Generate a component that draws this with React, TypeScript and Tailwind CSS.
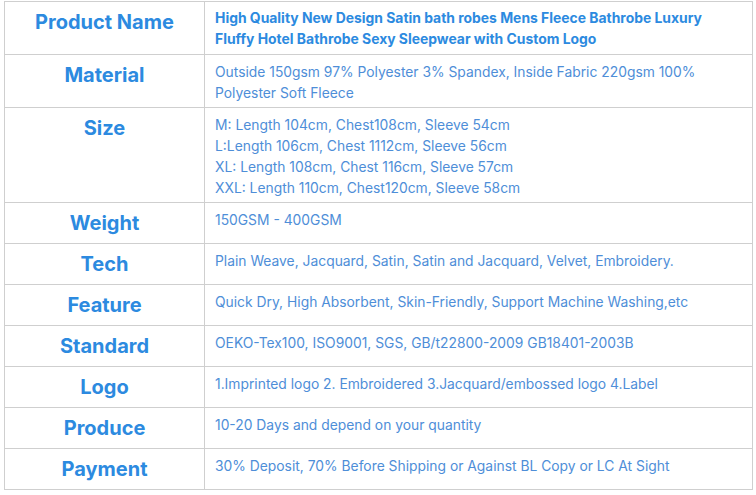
const rows: { label: string; lines: string[]; strong?: boolean }[] = [
  {
    label: "Product Name",
    lines: [
      "High Quality New Design Satin bath robes Mens Fleece Bathrobe Luxury",
      "Fluffy Hotel Bathrobe Sexy Sleepwear with Custom Logo",
    ],
    strong: true,
  },
  {
    label: "Material",
    lines: [
      "Outside 150gsm 97% Polyester 3% Spandex, Inside Fabric 220gsm 100%",
      "Polyester Soft Fleece",
    ],
  },
  {
    label: "Size",
    lines: [
      "M: Length 104cm, Chest108cm, Sleeve 54cm",
      "L:Length 106cm, Chest 1112cm, Sleeve 56cm",
      "XL: Length 108cm, Chest 116cm, Sleeve 57cm",
      "XXL: Length 110cm, Chest120cm, Sleeve 58cm",
    ],
  },
  { label: "Weight", lines: ["150GSM - 400GSM"] },
  {
    label: "Tech",
    lines: ["Plain Weave, Jacquard, Satin, Satin and Jacquard, Velvet, Embroidery."],
  },
  {
    label: "Feature",
    lines: ["Quick Dry, High Absorbent, Skin-Friendly, Support Machine Washing,etc"],
  },
  {
    label: "Standard",
    lines: ["OEKO-Tex100, ISO9001, SGS, GB/t22800-2009 GB18401-2003B"],
  },
  {
    label: "Logo",
    lines: ["1.Imprinted logo 2. Embroidered 3.Jacquard/embossed logo 4.Label"],
  },
  { label: "Produce", lines: ["10-20 Days and depend on your quantity"] },
  {
    label: "Payment",
    lines: ["30% Deposit, 70% Before Shipping or Against BL Copy or LC At Sight"],
  },
];

export default function App() {
  return (
    <div className="min-h-[495px] w-[756px] bg-white pl-1 pt-px font-['Inter',sans-serif]">
      <table className="w-[749px] border-collapse">
        <tbody>
          {rows.map((row) => (
            <tr key={row.label}>
              <td className="w-[200px] border border-[#cfcfcf] px-[10px] py-[5px] text-center align-top text-[20px] font-bold leading-[30px] text-[#2c8ae0]">
                {row.label}
              </td>
              <td
                className={
                  row.strong
                    ? "border border-[#cfcfcf] px-[10px] pt-[6px] pb-[4px] align-top text-[13.9px] font-bold leading-[21px] text-[#2c8ae0]"
                    : "border border-[#cfcfcf] px-[10px] pt-[7px] pb-[3px] align-top text-[13.85px] leading-[21px] text-[#4e8ed8]"
                }
              >
                {row.lines.map((line) => (
                  <div key={line}>{line}</div>
                ))}
              </td>
            </tr>
          ))}
        </tbody>
      </table>
    </div>
  );
}
